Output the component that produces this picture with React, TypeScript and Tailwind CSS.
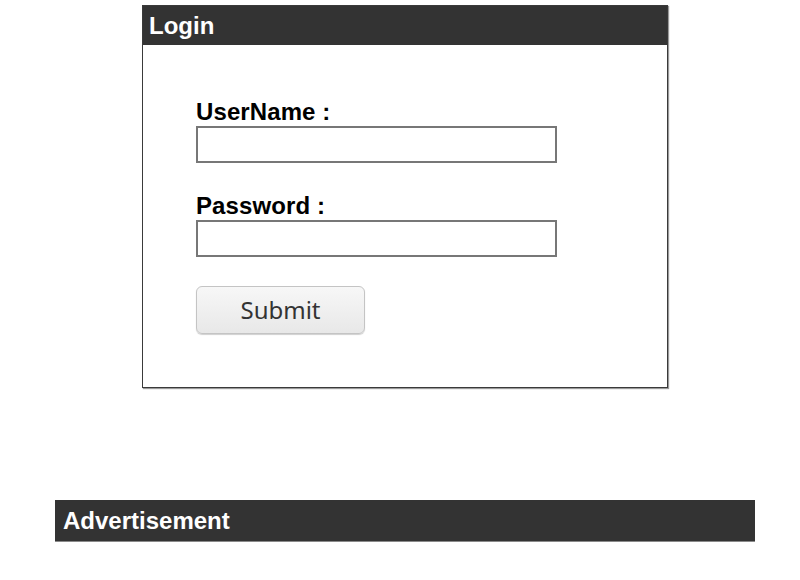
export default function App() {
  return (
    <div className="w-[800px] h-[580px] bg-white overflow-hidden pt-[5px] font-['Liberation_Sans',Arial,sans-serif]">
      <div className="ml-[142px] w-[526px] border border-[#3a3a3a] shadow-[1px_1px_1px_#9a9a9a]">
        <div className="h-[39px] bg-[#333333] text-white font-bold text-[24px] leading-[39px] pl-[6px]">
          Login
        </div>
        <form className="pl-[53px] pt-[53px] pb-[53px]" onSubmit={e => e.preventDefault()}>
          <label className="block font-bold text-[24px] leading-[28px] text-black tracking-[0.1px]">UserName :</label>
          <input
            type="text"
            className="block w-[361px] h-[37px] border-2 border-[#777777] bg-white"
          />
          <label className="block mt-[29px] font-bold text-[24px] leading-[28px] text-black tracking-[0.1px]">Password :</label>
          <input
            type="password"
            className="block w-[361px] h-[37px] border-2 border-[#777777] bg-white"
          />
          <button
            type="submit"
            className="mt-[29px] block w-[169px] h-[48px] rounded-[6px] border border-[#c4c4c4] bg-gradient-to-b from-[#f7f7f7] to-[#e8e8e8] shadow-[0_1px_1px_#d0d0d0] text-[24px] text-[#333333] font-['Noto_Sans','Open_Sans',sans-serif]"
          >
            Submit
          </button>
        </form>
      </div>
      <div className="mt-[112px] ml-[55px] w-[700px] h-[42px] bg-[#333333] border-b border-[#8a8a8a] text-white font-bold text-[24px] leading-[42px] pl-[8px]">
        Advertisement
      </div>
    </div>
  );
}
